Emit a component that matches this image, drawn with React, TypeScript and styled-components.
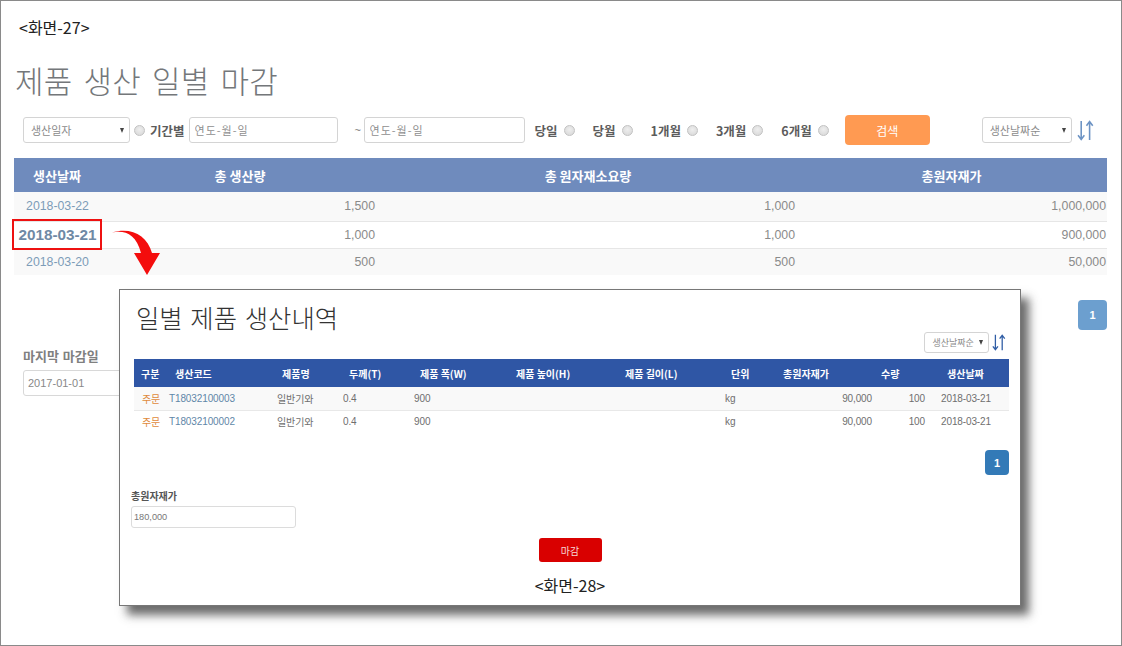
import React from 'react';
import styled, { createGlobalStyle } from 'styled-components';

const FONT = `"Liberation Sans", "Noto Sans CJK KR", sans-serif`;

const Global = createGlobalStyle`
  html, body { margin: 0; padding: 0; background: #fff; }
  * { box-sizing: border-box; }
  body { font-family: ${FONT}; }
`;

const Frame = styled.div`
  position: relative;
  width: 1122px;
  height: 646px;
  border: 1px solid #8a8a8a;
  padding: 0 14px 0 13px;
  overflow: hidden;
`;

const Caption = styled.div`
  font-family: "Noto Sans CJK KR", sans-serif;
  font-size: 16px;
  line-height: 20px;
  color: #222;
`;

const TopCaption = styled(Caption)`
  padding: 16px 0 0 5px;
`;

const PageTitle = styled.h1`
  margin: 20px 0 0 1px;
  font-family: "Noto Sans CJK KR", sans-serif;
  font-weight: 300;
  font-size: 31px;
  line-height: 46px;
  letter-spacing: 0.2px;
  word-spacing: 4px;
  color: #74777a;
`;

const FilterBar = styled.div`
  display: flex;
  align-items: center;
  height: 30px;
  margin-top: 12px;
  padding-left: 9px;
`;

const SelectBox = styled.div<{ $w: number; $h: number; $size: number }>`
  display: flex;
  align-items: center;
  justify-content: space-between;
  flex: none;
  width: ${p => p.$w}px;
  height: ${p => p.$h}px;
  padding: 0 5px 0 7px;
  background: #fff;
  border: 1px solid #d4d4d4;
  border-radius: 3px;
  font-family: "Noto Sans CJK KR", sans-serif;
  font-size: ${p => p.$size}px;
  color: #8b8b8b;
`;

const Caret = styled.span`
  width: 0;
  height: 0;
  border-left: 2.5px solid transparent;
  border-right: 2.5px solid transparent;
  border-top: 5px solid #444;
`;

const Radio = styled.span`
  flex: none;
  width: 11px;
  height: 11px;
  border-radius: 50%;
  border: 1px solid #c2c2c2;
  background: radial-gradient(circle at 50% 40%, #eee, #d6d6d6);
`;

const RadioGroup = styled.div`
  display: flex;
  align-items: center;
  gap: 5px;
  margin: 0 4px;
`;

const FilterLabel = styled.span`
  font-family: "Noto Sans CJK KR", sans-serif;
  font-size: 12.5px;
  font-weight: 700;
  color: #5c5c5c;
  white-space: nowrap;
`;

const DateInput = styled.input<{ $w: number }>`
  flex: none;
  width: ${p => p.$w}px;
  height: 26px;
  padding: 0 5px;
  border: 1px solid #d4d4d4;
  border-radius: 3px;
  outline: none;
  font-family: "Noto Sans CJK KR", sans-serif;
  font-size: 11px;
  letter-spacing: 1px;
  &::placeholder { color: #8f8f8f; opacity: 1; }
`;

const Tilde = styled.span`
  flex: none;
  width: 26px;
  padding-left: 17px;
  font-size: 11px;
  color: #777;
`;

const Periods = styled.div`
  display: flex;
  align-items: center;
  gap: 18px;
  margin-left: 10px;
`;

const Period = styled.label`
  display: flex;
  align-items: center;
  gap: 6px;
`;

const SearchButton = styled.button`
  flex: none;
  width: 85px;
  height: 30px;
  margin-left: 16px;
  border: 0;
  border-radius: 4px;
  background: #ff9a52;
  color: #fff;
  font-family: "Noto Sans CJK KR", sans-serif;
  font-size: 12px;
`;

const SortGroup = styled.div`
  display: flex;
  align-items: center;
  gap: 5px;
  margin-left: 52px;
`;

const MainTable = styled.table`
  width: 1093px;
  margin-top: 13px;
  border-collapse: collapse;
  table-layout: fixed;
`;

const MainHead = styled.th<{ $w: number }>`
  width: ${p => p.$w}px;
  height: 34px;
  padding: 0;
  background: #6f8bbd;
  color: #fff;
  font-family: "Noto Sans CJK KR", sans-serif;
  font-size: 13px;
  font-weight: 700;
  text-align: center;
`;

const MainRow = styled.tr<{ $odd: boolean; $h: number }>`
  height: ${p => p.$h}px;
  background: ${p => (p.$odd ? '#f9f9f9' : '#fff')};
  border-bottom: 1px solid #e6e6e6;
  &:last-child { border-bottom: 0; }
`;

const DateCell = styled.td<{ $marked: boolean }>`
  padding: 0 0 0 1px;
  text-align: center;
  font-size: ${p => (p.$marked ? 15.3 : 12.3)}px;
  font-weight: ${p => (p.$marked ? 700 : 400)};
  color: ${p => (p.$marked ? '#6f89a5' : '#7d9cb8')};
  outline: ${p => (p.$marked ? '2px solid #ee1111' : 'none')};
`;

const NumCell = styled.td<{ $end: number }>`
  padding: 0 ${p => p.$end}px 0 0;
  text-align: right;
  font-size: 12.3px;
  color: #8a8a8a;
`;

const Pager = styled.div`
  display: flex;
  justify-content: flex-end;
  margin-top: 25px;
`;

const PageButton = styled.span<{ $size: number; $bg: string }>`
  display: flex;
  align-items: center;
  justify-content: center;
  width: ${p => p.$size}px;
  height: ${p => p.$size + 1}px;
  border-radius: 4px;
  background: ${p => p.$bg};
  color: #fff;
  font-size: 11px;
  font-weight: 700;
`;

const ClosingField = styled.div`
  margin-top: 18px;
  padding-left: 9px;
`;

const FieldLabel = styled.div`
  font-family: "Noto Sans CJK KR", sans-serif;
  font-size: 13px;
  line-height: 16px;
  font-weight: 700;
  word-spacing: 1px;
  color: #808080;
`;

const ClosingInput = styled.input`
  display: block;
  width: 170px;
  height: 26px;
  margin-top: 6px;
  padding: 0 4px;
  border: 1px solid #d8d8d8;
  border-radius: 3px;
  outline: none;
  font-family: ${FONT};
  font-size: 11px;
  color: #888;
`;

const Arrow = styled.svg`
  position: absolute;
  left: 108px;
  top: 222px;
`;

const Modal = styled.section`
  position: absolute;
  left: 118px;
  top: 288px;
  width: 902px;
  height: 317px;
  padding: 0 11px;
  background: #fff;
  border: 1px solid #777;
  box-shadow: 8px 9px 9px rgba(50, 50, 50, 0.72);
`;

const ModalTitle = styled.h2`
  margin: 9px 0 0 5px;
  font-family: "Noto Sans CJK KR", sans-serif;
  font-weight: 300;
  font-size: 25.4px;
  line-height: 36px;
  word-spacing: 2px;
  color: #333;
`;

const ModalSort = styled.div`
  display: flex;
  justify-content: flex-end;
  align-items: center;
  gap: 3px;
  height: 21px;
  margin-top: -3px;
  padding-right: 3px;
`;

const ModalTable = styled.table`
  width: 875px;
  margin: 6px 0 0 3px;
  border-collapse: collapse;
  table-layout: fixed;
`;

const ModalHead = styled.th<{ $w: number; $pad: number }>`
  width: ${p => p.$w}px;
  height: 28px;
  padding: 0 0 0 ${p => p.$pad}px;
  background: #2f56a5;
  color: #fff;
  font-family: "Noto Sans CJK KR", sans-serif;
  font-size: 10px;
  font-weight: 700;
  text-align: left;
  white-space: nowrap;
`;

const ModalRow = styled.tr<{ $odd: boolean }>`
  height: 23px;
  background: ${p => (p.$odd ? '#f9f9f9' : '#fff')};
  border-bottom: 1px solid #e8e8e8;
  &:last-child { border-bottom: 0; }
`;

const ModalCell = styled.td<{ $tone?: string; $right?: boolean }>`
  padding: 0 8px;
  font-family: ${FONT};
  font-size: 10px;
  letter-spacing: -0.12px;
  white-space: nowrap;
  text-align: ${p => (p.$right ? 'right' : 'left')};
  color: ${p => p.$tone || '#6f6f6f'};
`;

const ModalPager = styled.div`
  display: flex;
  justify-content: flex-end;
  margin-top: 17px;
`;

const TotalField = styled.div`
  margin-top: 14px;
`;

const TotalLabel = styled.div`
  font-family: "Noto Sans CJK KR", sans-serif;
  font-size: 10px;
  line-height: 14px;
  font-weight: 700;
  color: #555;
`;

const TotalInput = styled.input`
  display: block;
  width: 165px;
  height: 22px;
  margin-top: 3px;
  padding: 0 2px;
  border: 1px solid #dcdcdc;
  border-radius: 3px;
  outline: none;
  font-family: ${FONT};
  font-size: 9.2px;
  color: #777;
`;

const ModalActions = styled.div`
  display: flex;
  flex-direction: column;
  align-items: center;
  margin-top: 10px;
`;

const CloseButton = styled.button`
  width: 63px;
  height: 24px;
  border: 0;
  border-radius: 3px;
  background: #d90000;
  color: #f6d6d6;
  font-family: "Noto Sans CJK KR", sans-serif;
  font-size: 10px;
`;

const BottomCaption = styled(Caption)`
  margin-top: 13px;
`;

const SortIcon = ({ color, h }: { color: string; h: number }) => (
  <svg width={h * 0.8} height={h} viewBox="0 0 16 20" fill="none" stroke={color} strokeWidth="1.5">
    <path d="M4 1v17M1 14.5 4 18.5 7 14.5" />
    <path d="M12 19V2M9 5.5 12 1.5 15 5.5" />
  </svg>
);

const mainRows = [
  { date: '2018-03-22', qty: '1,500', used: '1,000', cost: '1,000,000', h: 29 },
  { date: '2018-03-21', qty: '1,000', used: '1,000', cost: '900,000', h: 27, marked: true },
  { date: '2018-03-20', qty: '500', used: '500', cost: '50,000', h: 27 },
];

const mainCols = [
  { label: '생산날짜', w: 86 },
  { label: '총 생산량', w: 280 },
  { label: '총 원자재소요량', w: 416 },
  { label: '총원자재가', w: 311 },
];

const modalCols = [
  { label: '구분', w: 27, pad: 7 },
  { label: '생산코드', w: 108, pad: 14 },
  { label: '제품명', w: 66, pad: 13 },
  { label: '두께(T)', w: 71, pad: 14 },
  { label: '제품 폭(W)', w: 94, pad: 14 },
  { label: '제품 높이(H)', w: 110, pad: 16 },
  { label: '제품 길이(L)', w: 107, pad: 15 },
  { label: '단위', w: 63, pad: 14 },
  { label: '총원자재가', w: 100, pad: 3 },
  { label: '수량', w: 53, pad: 1 },
  { label: '생산날짜', w: 76, pad: 14 },
];

const modalRows = ['T18032100003', 'T18032100002'];

export default function App() {
  return (
    <Frame>
      <Global />
      <TopCaption>&lt;화면-27&gt;</TopCaption>
      <PageTitle>제품 생산 일별 마감</PageTitle>

      <FilterBar>
        <SelectBox $w={107} $h={26} $size={11}>
          생산일자 <Caret />
        </SelectBox>
        <RadioGroup>
          <Radio />
          <FilterLabel>기간별</FilterLabel>
        </RadioGroup>
        <DateInput $w={149} placeholder="연도-월-일" readOnly />
        <Tilde>~</Tilde>
        <DateInput $w={161} placeholder="연도-월-일" readOnly />
        <Periods>
          {['당일', '당월', '1개월', '3개월', '6개월'].map(label => (
            <Period key={label}>
              <FilterLabel>{label}</FilterLabel>
              <Radio />
            </Period>
          ))}
        </Periods>
        <SearchButton>검색</SearchButton>
        <SortGroup>
          <SelectBox $w={90} $h={26} $size={11}>
            생산날짜순 <Caret />
          </SelectBox>
          <SortIcon color="#6c93c4" h={21} />
        </SortGroup>
      </FilterBar>

      <MainTable>
        <thead>
          <tr>
            {mainCols.map(c => (
              <MainHead key={c.label} $w={c.w}>{c.label}</MainHead>
            ))}
          </tr>
        </thead>
        <tbody>
          {mainRows.map((r, i) => (
            <MainRow key={r.date} $odd={i % 2 === 0} $h={r.h}>
              <DateCell $marked={!!r.marked}>{r.date}</DateCell>
              <NumCell $end={5}>{r.qty}</NumCell>
              <NumCell $end={1}>{r.used}</NumCell>
              <NumCell $end={1}>{r.cost}</NumCell>
            </MainRow>
          ))}
        </tbody>
      </MainTable>

      <Pager>
        <PageButton $size={29} $bg="#6c9fcf">1</PageButton>
      </Pager>

      <ClosingField>
        <FieldLabel>마지막 마감일</FieldLabel>
        <ClosingInput value="2017-01-01" readOnly />
      </ClosingField>

      <Arrow width="56" height="54" viewBox="0 0 56 54">
        <path d="M3 9.500C16 7 27 11 32 30L25 30L38 52L51 30L43 30C38 12 22 4 3 9.500Z" fill="#f40d0d" />
      </Arrow>

      <Modal>
        <ModalTitle>일별 제품 생산내역</ModalTitle>
        <ModalSort>
          <SelectBox $w={65} $h={21} $size={9}>
            생산날짜순 <Caret />
          </SelectBox>
          <SortIcon color="#2f5da5" h={17} />
        </ModalSort>
        <ModalTable>
          <thead>
            <tr>
              {modalCols.map(c => (
                <ModalHead key={c.label} $w={c.w} $pad={c.pad}>{c.label}</ModalHead>
              ))}
            </tr>
          </thead>
          <tbody>
            {modalRows.map((code, i) => (
              <ModalRow key={code} $odd={i === 0}>
                <ModalCell $tone="#e08a3c">주문</ModalCell>
                <ModalCell $tone="#5f87a8">{code}</ModalCell>
                <ModalCell>일반기와</ModalCell>
                <ModalCell>0.4</ModalCell>
                <ModalCell>900</ModalCell>
                <ModalCell />
                <ModalCell />
                <ModalCell>kg</ModalCell>
                <ModalCell $right>90,000</ModalCell>
                <ModalCell $right>100</ModalCell>
                <ModalCell>2018-03-21</ModalCell>
              </ModalRow>
            ))}
          </tbody>
        </ModalTable>
        <ModalPager>
          <PageButton $size={24} $bg="#337ab7">1</PageButton>
        </ModalPager>
        <TotalField>
          <TotalLabel>총원자재가</TotalLabel>
          <TotalInput value="180,000" readOnly />
        </TotalField>
        <ModalActions>
          <CloseButton>마감</CloseButton>
          <BottomCaption>&lt;화면-28&gt;</BottomCaption>
        </ModalActions>
      </Modal>
    </Frame>
  );
}
